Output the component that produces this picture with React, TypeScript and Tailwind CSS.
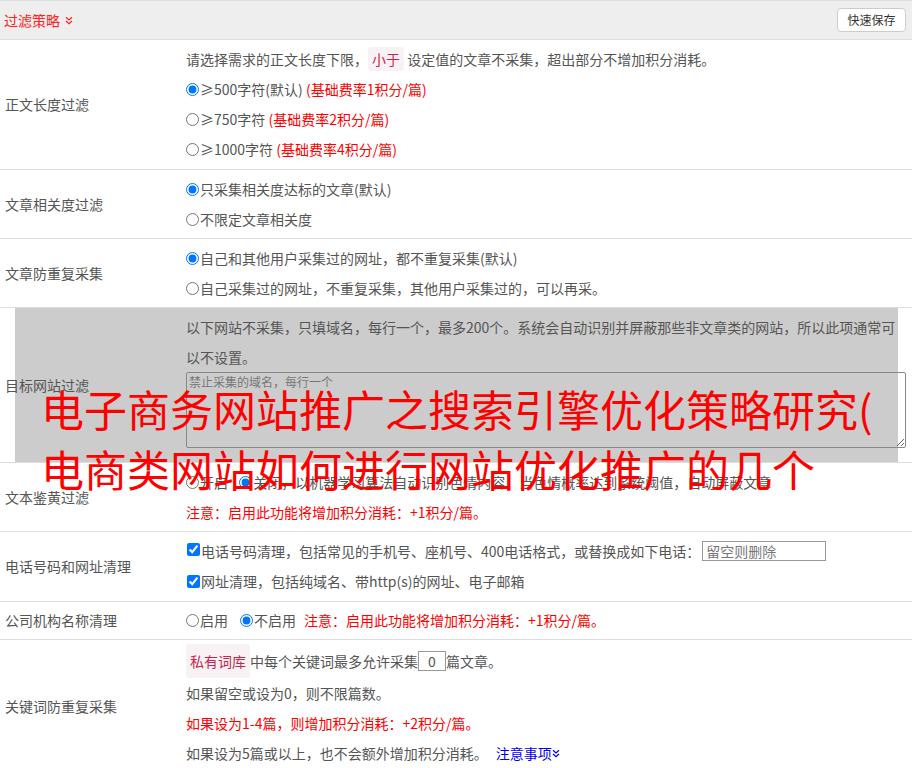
import React from "react";

const DoubleDown = ({ className = "" }: { className?: string }) => (
  <svg width="8" height="9" viewBox="0 0 8 9" fill="none" stroke="currentColor" strokeWidth="1.2" className={className}>
    <path d="M1 1.2l3 2.8 3-2.8M1 5l3 2.8 3-2.8" />
  </svg>
);

const Radio = ({ name, checked }: { name: string; checked?: boolean }) => (
  <input
    type="radio"
    name={name}
    defaultChecked={checked}
    className="m-0 mr-px align-middle relative -top-[2px] w-[13px] h-[13px]"
  />
);

const Check = () => (
  <input
    type="checkbox"
    defaultChecked
    className="m-0 ml-px mr-px align-middle relative -top-[2px] w-[13px] h-[13px]"
  />
);

const Tag = ({ children }: { children: React.ReactNode }) => (
  <span className="bg-[#f9f2f4] text-[#c7254e] px-[4px] py-[2px] rounded-[3px]">{children}</span>
);

const Row = ({
  label,
  children,
  extra,
  pad = "py-1",
}: {
  label: string;
  children: React.ReactNode;
  extra?: React.ReactNode;
  pad?: string;
}) => (
  <div className="relative flex border-b border-[#ddd]">
    {extra}
    <div className="relative w-[186px] shrink-0 pl-[5px] flex items-center">{label}</div>
    <div className={`relative flex-1 leading-[30px] ${pad}`}>{children}</div>
  </div>
);

export default function App() {
  return (
    <div className="relative w-full min-h-screen bg-white text-[14px] text-[#555] font-['Noto_Sans_CJK_SC','Noto_Sans',sans-serif] overflow-hidden">
      {/* header */}
      <div className="flex items-center justify-between h-[40px] bg-[#eeeeee] border-t border-b border-[#ddd] pl-[4px] pr-[6px]">
        <div className="flex items-center gap-[5px] text-[#ff2222]">
          <span>过滤策略</span>
          <DoubleDown />
        </div>
        <button className="h-[24px] w-[69px] bg-white border border-[#ccc] rounded-[4px] text-[12px] text-[#333] leading-none">
          快速保存
        </button>
      </div>

      <Row label="正文长度过滤" pad="pt-1 pb-[5px]">
        <div>
          请选择需求的正文长度下限，<Tag>小于</Tag> 设定值的文章不采集，超出部分不增加积分消耗。
        </div>
        <div>
          <Radio name="len" checked />≥500字符(默认) <span className="text-[#ff0000]">(基础费率1积分/篇)</span>
        </div>
        <div>
          <Radio name="len" />≥750字符 <span className="text-[#ff0000]">(基础费率2积分/篇)</span>
        </div>
        <div>
          <Radio name="len" />≥1000字符 <span className="text-[#ff0000]">(基础费率4积分/篇)</span>
        </div>
      </Row>

      <Row label="文章相关度过滤">
        <div>
          <Radio name="rel" checked />只采集相关度达标的文章(默认)
        </div>
        <div>
          <Radio name="rel" />不限定文章相关度
        </div>
      </Row>

      <Row label="文章防重复采集">
        <div>
          <Radio name="dup" checked />自己和其他用户采集过的网址，都不重复采集(默认)
        </div>
        <div>
          <Radio name="dup" />自己采集过的网址，不重复采集，其他用户采集过的，可以再采。
        </div>
      </Row>

      <Row
        label="目标网站过滤"
        extra={<div className="absolute top-0 bottom-0 left-[15px] right-[14px] bg-[#cccccc]" />}
      >
        <div className="whitespace-nowrap">
          以下网站不采集，只填域名，每行一个，最多200个。系统会自动识别并屏蔽那些非文章类的网站，所以此项通常可
          <br />
          以不设置。
        </div>
        <textarea
          placeholder="禁止采集的域名，每行一个"
          className="block w-[720px] h-[76px] border border-[#888] rounded-[2px] text-[12px] leading-[18px] px-[2px] py-0 mb-[10px] placeholder:text-[#777] bg-transparent"
        />
      </Row>

      <Row label="文本鉴黄过滤">
        <div>
          <Radio name="porn" />开启 <span className="inline-block w-[8px]" />
          <Radio name="porn" checked />关闭，以机器学习算法自动识别色情内容，当色情概率达到系统阈值，自动屏蔽文章
        </div>
        <div className="text-[#ff0000]">注意：启用此功能将增加积分消耗：+1积分/篇。</div>
      </Row>

      <Row label="电话号码和网址清理" pad="pt-[4px] pb-[5px]">
        <div className="flex items-center">
          <Check />
          <span>电话号码清理，包括常见的手机号、座机号、400电话格式，或替换成如下电话：</span>
          <input
            placeholder="留空则删除"
            className="ml-[2px] w-[124px] h-[20px] border border-[#999] px-[3px] text-[14px] leading-[18px] placeholder:text-[#777]"
          />
        </div>
        <div>
          <Check />网址清理，包括纯域名、带http(s)的网址、电子邮箱
        </div>
      </Row>

      <Row label="公司机构名称清理" pad="pt-[3px] pb-[4px]">
        <div>
          <Radio name="org" />启用<span className="inline-block w-[12px]" />
          <Radio name="org" checked />不启用<span className="inline-block w-[8px]" />
          <span className="text-[#ff0000]">注意：启用此功能将增加积分消耗：+1积分/篇。</span>
        </div>
      </Row>

      <Row label="关键词防重复采集">
        <div className="flex items-center">
          <Tag>私有词库</Tag>
          <span>中每个关键词最多允许采集</span>
          <span className="inline-flex items-center justify-center w-[28px] h-[20px] border border-[#999] text-[14px] leading-none">
            0
          </span>
          <span>篇文章。</span>
        </div>
        <div>如果留空或设为0，则不限篇数。</div>
        <div className="text-[#ff0000]">如果设为1-4篇，则增加积分消耗：+2积分/篇。</div>
        <div className="flex items-center">
          <span>如果设为5篇或以上，也不会额外增加积分消耗。</span>
          <span className="ml-[8px] text-[#0000ee]">注意事项</span>
          <DoubleDown className="text-[#0000ee]" />
        </div>
      </Row>

      {/* overlay title */}
      <div className="pointer-events-none absolute left-[41px] top-[378px] text-[43px] leading-[60px] text-[#ff0000] whitespace-nowrap">
        <div>电子商务网站推广之搜索引擎优化策略研究(</div>
        <div>电商类网站如何进行网站优化推广的几个</div>
      </div>
    </div>
  );
}
